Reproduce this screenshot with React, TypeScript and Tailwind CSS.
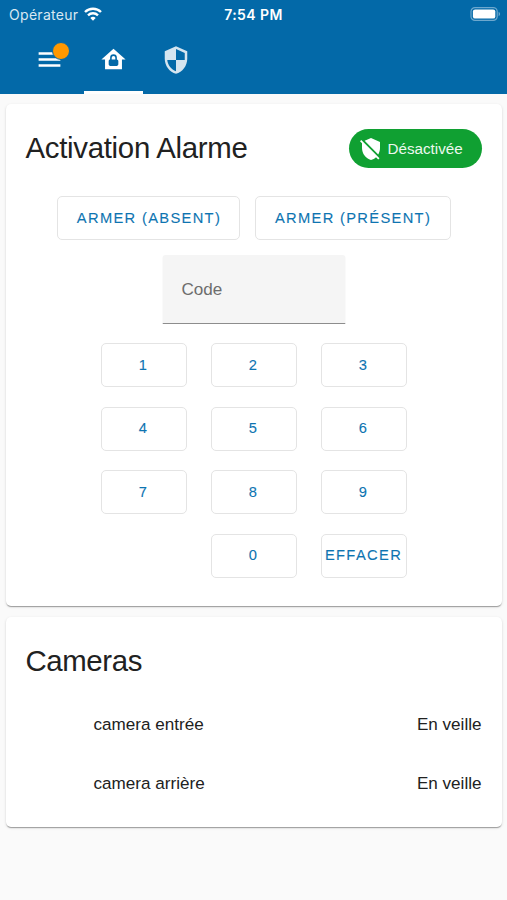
import type { ReactNode } from "react";

const icons = {
  menu: "M3,6H21V8H3V6M3,11H21V13H3V11M3,16H21V18H3V16Z",
  homeLock:
    "M12,3L2,12H5V20H19V12H22L12,3M12,7.7A2.8,2.8 0 0,1 14.8,10.5V11.9C15.4,11.9 16,12.5 16,13.2V16C16,16.7 15.4,17.3 14.7,17.3H9.2C8.6,17.3 8,16.7 8,16V13.1C8,12.5 8.6,11.9 9.2,11.9V10.5A2.8,2.8 0 0,1 12,7.7M12,9A1.5,1.5 0 0,0 10.5,10.5V11.9H13.5V10.5A1.5,1.5 0 0,0 12,9Z",
  security:
    "M12,12H5C5.53,16.11 8.28,19.78 12,20.92V12H19V6.3L12,3.19M12,1L3,5V11C3,16.55 6.84,21.73 12,23C17.16,21.73 21,16.55 21,11V5L12,1Z",
  shieldOff:
    "M1,4.27L2.28,3L20.5,21.22L19.23,22.5L17,20.25C15.57,21.57 13.87,22.54 12,23C6.84,21.74 3,16.55 3,11V6.27L1,4.27M12,1L21,5V11C21,13.28 20.35,15.5 19.23,17.41L5.65,3.82L12,1Z",
};

function Icon({ path, className }: { path: string; className?: string }) {
  return (
    <svg viewBox="0 0 24 24" fill="currentColor" fillRule="evenodd" className={className}>
      <path d={path} />
    </svg>
  );
}

function Button({ children, className = "" }: { children: ReactNode; className?: string }) {
  return (
    <button
      className={`h-11 rounded-[5px] border-[1.5px] border-[#e4e4e4] text-center text-[14.7px] whitespace-nowrap text-[#0d74b1] [-webkit-text-stroke:0.1px_#0d74b1] ${className}`}
    >
      {children}
    </button>
  );
}

function Card({ children, className = "" }: { children: ReactNode; className?: string }) {
  return (
    <section
      className={`mx-auto w-[496px] rounded-[5px] bg-white px-5 shadow-[0_2px_1px_-1px_rgba(0,0,0,0.2),0_1px_1px_0_rgba(0,0,0,0.14),0_1px_3px_0_rgba(0,0,0,0.12)] ${className}`}
    >
      {children}
    </section>
  );
}

function StatusBar() {
  return (
    <div className="grid h-7 grid-cols-3 items-center pr-[6px] pl-[9px] font-[Inter,sans-serif] text-[14px]">
      <div className="flex items-center gap-[6px] text-[#d9e8f2]">
        <span className="tracking-[0.3px]">Opérateur</span>
        <svg viewBox="0 0 18 14" className="mb-px h-[14px] w-[18px]" fill="none" stroke="white" strokeWidth="2.4">
          <path d="M1 5 A11.4 11.4 0 0 1 17 5" />
          <path d="M4 8.3 A7.2 7.2 0 0 1 14 8.3" />
          <path d="M9 13.8 L6.3 11 A3.9 3.9 0 0 1 11.7 11 Z" fill="white" stroke="none" />
        </svg>
      </div>
      <span className="pr-[3px] text-center tracking-[0.4px] font-semibold text-white">7:54 PM</span>
      <svg viewBox="0 0 31 15" className="h-[15px] w-[31px] justify-self-end">
        <rect x="1" y="0.6" width="26.2" height="12.8" rx="4" fill="none" stroke="#6da8ce" strokeWidth="1.2" />
        <rect x="2.9" y="2.4" width="22.4" height="9.2" rx="2.2" fill="white" />
        <path d="M28.6 4.8 C30.6 5.8 30.6 8.2 28.6 9.2 Z" fill="#6da8ce" />
      </svg>
    </div>
  );
}

const keys = ["1", "2", "3", "4", "5", "6", "7", "8", "9", "", "0", "EFFACER"];
const cameras = ["camera entrée", "camera arrière"];

export default function App() {
  return (
    <main className="h-[900px] w-[507px] overflow-hidden bg-[#fafafa] font-['Liberation_Sans',Arial,sans-serif] text-[#212121]">
      <header className="h-[94px] bg-[#0369a8] text-white">
        <StatusBar />
        <nav className="flex h-[66px] pl-[35px]">
          <button className="relative mt-[17px] h-[29px] w-[29px]">
            <Icon path={icons.menu} className="size-[29px]" />
            <span className="absolute -top-[3px] left-[17px] size-[18px] rounded-full border-[1.5px] border-[#0369a8] bg-[#ff9800]" />
          </button>
          <button className="ml-5 flex w-[59px] justify-center border-b-[3px] border-white pt-[17px]">
            <Icon path={icons.homeLock} className="size-[29px]" />
          </button>
          <button className="ml-[18px] flex h-[63px] items-start pt-[17px] text-[#d5e5f0]">
            <Icon path={icons.security} className="size-[30px]" />
          </button>
        </nav>
      </header>

      <Card className="mt-[10px] h-[502px] pt-[25px]">
        <div className="flex h-[39px] items-center justify-between">
          <h1 className="pb-px text-[29.4px] tracking-[-0.3px]">Activation Alarme</h1>
          <div className="flex h-[39px] w-[133px] items-center gap-[5px] rounded-full bg-[#10a032] pl-[10px] text-[15.2px] text-[#edf8ef]">
            <Icon path={icons.shieldOff} className="size-6 text-white" />
            <span className="pt-px">Désactivée</span>
          </div>
        </div>
        <div className="mt-7 flex justify-center gap-[15px]">
          <Button className="w-[183px] pl-[2px] tracking-[1.33px]">ARMER (ABSENT)</Button>
          <Button className="w-[196px] pl-[1px] tracking-[1.33px]">ARMER (PRÉSENT)</Button>
        </div>
        <div className="mx-auto mt-[15px] flex h-[69px] w-[183px] translate-x-[0.5px] items-center rounded-t-[3px] border-b border-[#8d8d8d] bg-[#f5f5f5] pt-[2px] pl-[19px] text-[17.1px] text-[#6d6d6d]">
          Code
        </div>
        <div className="mx-auto mt-[19px] grid w-[306px] grid-cols-[86px_86px_86px] gap-x-6 gap-y-[19.5px]">
          {keys.map((k, i) => (k ? <Button key={i} className="w-[86px] tracking-[1.35px]">{k}</Button> : <span key={i} />))}
        </div>
      </Card>

      <Card className="mt-[11px] h-[210px] pt-[24px]">
        <h1 className="h-[39px] text-[29.4px] leading-[39px] tracking-[-0.4px]">Cameras</h1>
        <ul className="mt-[15px] text-[17.1px]">
          {cameras.map((name) => (
            <li key={name} className="flex h-[59px] items-center justify-between pl-[68px]">
              <span>{name}</span>
              <span>En veille</span>
            </li>
          ))}
        </ul>
      </Card>
    </main>
  );
}
